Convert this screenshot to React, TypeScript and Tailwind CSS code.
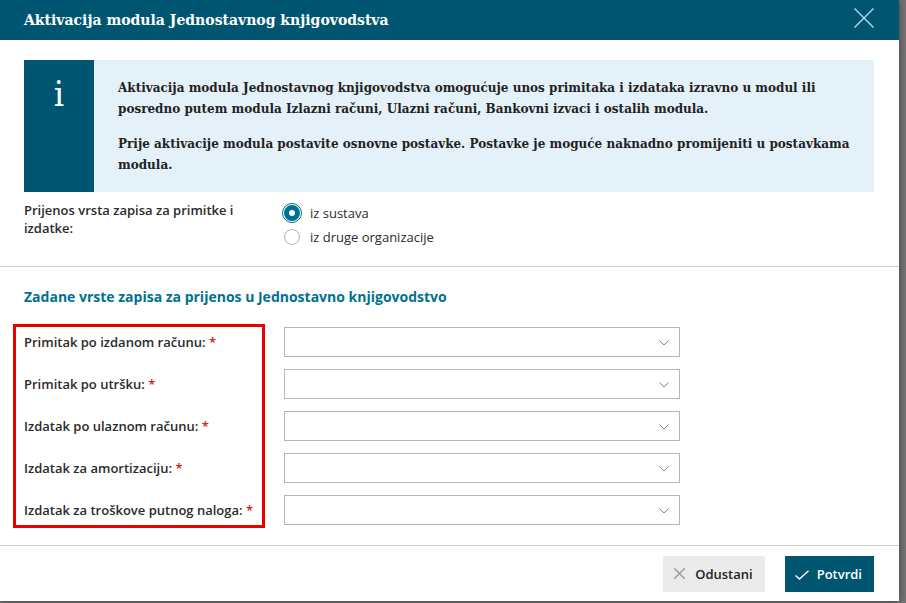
import { useState } from "react";

const fields = [
  { id: "primitak-racun", label: "Primitak po izdanom računu:" },
  { id: "primitak-utrzak", label: "Primitak po utršku:" },
  { id: "izdatak-racun", label: "Izdatak po ulaznom računu:" },
  { id: "izdatak-amortizacija", label: "Izdatak za amortizaciju:" },
  { id: "izdatak-putni-nalog", label: "Izdatak za troškove putnog naloga:" },
];

const sources = [
  { value: "sustav", label: "iz sustava" },
  { value: "organizacija", label: "iz druge organizacije" },
];

function CloseIcon({ className }: { className: string }) {
  return (
    <svg viewBox="0 0 20 20" className={className} fill="none" stroke="currentColor" aria-hidden="true">
      <path d="M0.5 0.5 19.5 19.5M19.5 0.5 0.5 19.5" vectorEffect="non-scaling-stroke" strokeWidth="1.4" />
    </svg>
  );
}

function RadioOption({
  label,
  value,
  checked,
  onSelect,
}: {
  label: string;
  value: string;
  checked: boolean;
  onSelect: (value: string) => void;
}) {
  return (
    <label className="flex h-6 items-center gap-2 text-[13px] leading-6">
      <span className="flex size-5 items-center justify-center">
        <input
          type="radio"
          name="izvor"
          value={value}
          checked={checked}
          onChange={() => onSelect(value)}
          className="size-4 shrink-0 appearance-none rounded-full border border-[#b5b5b5] bg-white checked:border-[5px] checked:border-[#00718f] checked:outline checked:outline-offset-1 checked:outline-[#00718f]"
        />
      </span>
      {label}
    </label>
  );
}

function SelectField({ id, label }: { id: string; label: string }) {
  return (
    <div className="grid grid-cols-[260px_minmax(0,396px)] items-center">
      <label htmlFor={id} className="text-[13px] leading-[18px] font-semibold">
        {label} <span className="text-[#d0201c]">*</span>
      </label>
      <div className="relative">
        <select
          id={id}
          required
          className="block h-[30px] w-full appearance-none border border-[#b5b5b5] bg-white px-2 text-[13px]"
        >
          <option value=""></option>
        </select>
        <svg
          viewBox="0 0 10 6"
          className="pointer-events-none absolute top-[13px] right-[11px] h-1.5 w-2.5"
          fill="none"
          stroke="#858585"
          aria-hidden="true"
        >
          <path d="M0.5 0.5 5 5 9.5 0.5" />
        </svg>
      </div>
    </div>
  );
}

export default function App() {
  const [source, setSource] = useState("sustav");

  return (
    <div className="min-h-screen bg-[#757575] pr-[7px] pb-0.5 font-['Open_Sans',sans-serif] text-[#2b2b2b]">
      <div role="dialog" aria-labelledby="naslov" className="bg-white shadow-[0_0_8px_rgba(0,0,0,0.5)]">
        <header className="flex h-10 items-center justify-between bg-[#005670] pr-[25px] pl-6 text-white">
          <h1
            id="naslov"
            className="font-['Roboto_Slab','DejaVu_Serif',serif] text-sm font-bold"
          >
            Aktivacija modula Jednostavnog knjigovodstva
          </h1>
          <button type="button" aria-label="Zatvori" className="pb-1 text-[#b3dbe8]">
            <CloseIcon className="size-5" />
          </button>
        </header>

        <main>
          <section className="px-6 pt-5 pb-[17px]">
            <div className="mr-px flex bg-[#e4f1f9] font-['Roboto_Slab','DejaVu_Serif',serif] font-bold">
              <div className="flex w-[70px] shrink-0 justify-center bg-[#005670] pt-4 font-['Roboto_Slab','DejaVu_Serif_Condensed','DejaVu_Serif',serif] text-[36px] leading-9 font-normal text-white">
                i
              </div>
              <div className="flex flex-col gap-3.5 pt-[18px] pr-4 pb-4 pl-6 text-xs leading-[21px] text-[#222222]">
                <p>
                  Aktivacija modula Jednostavnog knjigovodstva omogućuje unos primitaka i izdataka izravno u modul ili
                  posredno putem modula Izlazni računi, Ulazni računi, Bankovni izvaci i ostalih modula.
                </p>
                <p>
                  Prije aktivacije modula postavite osnovne postavke. Postavke je moguće naknadno promijeniti u
                  postavkama modula.
                </p>
              </div>
            </div>

            <fieldset className="mt-[9px] grid grid-cols-[258px_1fr]" aria-labelledby="izvor-naziv">
              <span id="izvor-naziv" className="pr-8 text-[13px] leading-[18px] font-semibold">
                Prijenos vrsta zapisa za primitke i izdatke:
              </span>
              <div>
                {sources.map((option) => (
                  <RadioOption
                    key={option.value}
                    label={option.label}
                    value={option.value}
                    checked={source === option.value}
                    onSelect={setSource}
                  />
                ))}
              </div>
            </fieldset>
          </section>

          <section className="border-t border-[#cccccc] px-6 pt-5 pb-5">
            <h2 className="text-sm leading-5 font-bold text-[#00718f]">
              Zadane vrste zapisa za prijenos u Jednostavno knjigovodstvo
            </h2>
            <div className="relative mt-5 flex flex-col gap-3">
              {fields.map((field) => (
                <SelectField key={field.id} id={field.id} label={field.label} />
              ))}
              <div className="pointer-events-none absolute -inset-y-[3px] -left-[11px] w-[252px] border-3 border-[#ea0000]" />
            </div>
          </section>
        </main>

        <footer className="flex justify-end gap-5 border-t border-[#cccccc] pt-2.5 pr-[25px] pb-[9px] text-[13px] font-semibold">
          <button type="button" className="flex h-9 items-center gap-2.5 bg-[#ebebeb] pt-px pr-3 pl-[11px] text-[#222222]">
            <CloseIcon className="mb-0.5 size-[11px] text-[#999999]" />
            Odustani
          </button>
          <button type="button" className="flex h-9 items-center gap-2 bg-[#005670] pt-px pr-3 pl-2.5 text-white">
            <svg viewBox="0 0 14 10" className="h-2.5 w-3.5" fill="none" stroke="currentColor" strokeWidth="1.4" aria-hidden="true">
              <path d="M0.5 5.5 4.5 9 13.5 0.7" />
            </svg>
            Potvrdi
          </button>
        </footer>
      </div>
    </div>
  );
}
